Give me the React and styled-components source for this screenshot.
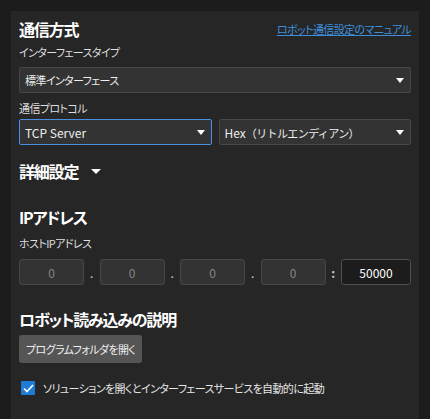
import React from 'react';
import styled, { createGlobalStyle } from 'styled-components';

const GlobalStyle = createGlobalStyle`
  html, body {
    margin: 0;
    padding: 0;
    background: #1c1c1c;
  }
  body {
    font-family: "Noto Sans CJK JP", "Noto Sans", sans-serif;
    font-feature-settings: "palt";
    color: #e6e6e6;
  }
`;

const Page = styled.div`
  padding: 11px 11px 0 11px;
  height: 419px;
  box-sizing: border-box;
  display: flex;
`;

const Panel = styled.div`
  flex: 1;
  background: #262626;
  padding: 8px 8px 0 8px;
  display: flex;
  flex-direction: column;
`;

const HeaderRow = styled.div`
  display: flex;
  align-items: center;
  justify-content: space-between;
  margin-top: ${(p) => p.$mt || 0}px;
`;

const Heading = styled.div`
  font-size: 16px;
  font-weight: 700;
  line-height: 20px;
  letter-spacing: -1.2px;
  color: #ffffff;
  display: flex;
  align-items: center;
  gap: 13px;
`;

const Link = styled.a`
  font-size: 11px;
  letter-spacing: -0.6px;
  color: #3d8fde;
  text-decoration: underline;
  line-height: 20px;
  cursor: pointer;
`;

const Label = styled.div`
  font-size: 11px;
  letter-spacing: -0.6px;
  line-height: 18px;
  color: #dedede;
  margin-top: ${(p) => p.$mt || 0}px;
`;

const Jp = styled.span`
  font-size: 11px;
  letter-spacing: -0.6px;
  font-feature-settings: ${(p) => (p.$full ? 'normal' : '"palt"')};
`;

const SelectRow = styled.div`
  display: flex;
  gap: 7px;
  margin-top: ${(p) => p.$mt || 0}px;
`;

const Select = styled.div`
  flex: 1;
  height: 26px;
  box-sizing: border-box;
  background: #333333;
  border: 1px solid ${(p) => (p.$focused ? '#4a8fe6' : '#474747')};
  border-radius: 2px;
  display: flex;
  align-items: center;
  justify-content: space-between;
  padding: 0 6px 0 5px;
  font-size: 12px;
  color: #eeeeee;
`;

const Caret = styled.span`
  width: 0;
  height: 0;
  border-left: 4px solid transparent;
  border-right: 4px solid transparent;
  border-top: 5px solid #ffffff;
`;

const BigCaret = styled(Caret)`
  border-left-width: 5px;
  border-right-width: 5px;
  border-top-width: 5px;
`;

const IpRow = styled.div`
  display: flex;
  align-items: center;
  margin-top: 7px;
`;

const IpField = styled.div`
  width: ${(p) => (p.$port ? 70 : 65)}px;
  height: 26px;
  box-sizing: border-box;
  border: 1px solid ${(p) => (p.$port ? '#4f4f4f' : '#474747')};
  background: ${(p) => (p.$port ? '#1c1c1c' : '#333333')};
  border-radius: 3px;
  display: flex;
  align-items: center;
  justify-content: center;
  font-size: 12px;
  color: ${(p) => (p.$port ? '#ffffff' : '#858585')};
`;

const Sep = styled.div`
  flex: 1;
  text-align: center;
  font-size: 12px;
  color: #cfcfcf;
  font-weight: ${(p) => (p.$colon ? 700 : 400)};
`;

const Button = styled.button`
  align-self: flex-start;
  margin-top: 6px;
  height: 28px;
  padding: 0 7px;
  border: none;
  border-radius: 3px;
  background: #555555;
  color: #eeeeee;
  font-family: inherit;
  font-feature-settings: "palt";
  font-size: 11px;
  letter-spacing: -0.6px;
`;

const CheckRow = styled.label`
  display: flex;
  align-items: center;
  gap: 8px;
  margin-top: 17px;
  margin-left: 2px;
  font-size: 11px;
  letter-spacing: -0.6px;
  color: #e6e6e6;
`;

const Box = styled.span`
  width: 14px;
  height: 14px;
  background: #1e7bd6;
  border-radius: 1px;
  display: flex;
  align-items: center;
  justify-content: center;
`;

export default function App() {
  return (
    <>
      <GlobalStyle />
      <Page>
        <Panel>
          <HeaderRow>
            <Heading>通信方式</Heading>
            <Link>ロボット通信設定のマニュアル</Link>
          </HeaderRow>
          <Label $mt={4}>インターフェースタイプ</Label>
          <SelectRow $mt={6}>
            <Select>
              <Jp>標準インターフェース</Jp>
              <Caret />
            </Select>
          </SelectRow>
          <Label $mt={6}>通信プロトコル</Label>
          <SelectRow $mt={2}>
            <Select $focused>
              <span>TCP Server</span>
              <Caret />
            </Select>
            <Select>
              <span>
                Hex<Jp $full>（リトルエンディアン）</Jp>
              </span>
              <Caret />
            </Select>
          </SelectRow>
          <HeaderRow $mt={16}>
            <Heading>
              詳細設定
              <BigCaret />
            </Heading>
          </HeaderRow>
          <HeaderRow $mt={26}>
            <Heading>IPアドレス</Heading>
          </HeaderRow>
          <Label $mt={7}>ホストIPアドレス</Label>
          <IpRow>
            <IpField>0</IpField>
            <Sep>.</Sep>
            <IpField>0</IpField>
            <Sep>.</Sep>
            <IpField>0</IpField>
            <Sep>.</Sep>
            <IpField>0</IpField>
            <Sep $colon>:</Sep>
            <IpField $port>50000</IpField>
          </IpRow>
          <HeaderRow $mt={24}>
            <Heading>ロボット読み込みの説明</Heading>
          </HeaderRow>
          <Button>プログラムフォルダを開く</Button>
          <CheckRow>
            <Box>
              <svg width="11" height="9" viewBox="0 0 11 9">
                <path d="M1 4.5 L4 7.5 L10 1" stroke="#fff" strokeWidth="1.6" fill="none" />
              </svg>
            </Box>
            ソリューションを開くとインターフェースサービスを自動的に起動
          </CheckRow>
        </Panel>
      </Page>
    </>
  );
}
